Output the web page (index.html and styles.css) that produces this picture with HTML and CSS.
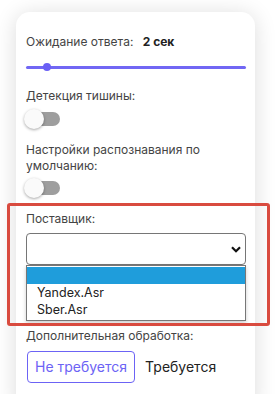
FILE: index.html
```html
<!DOCTYPE html>
<html lang="ru">
<head>
<meta charset="utf-8">
<link rel="stylesheet" href="styles.css">
</head>
<body>
<div class="card">
  <div class="field">
    <div class="label">Ожидание ответа: <b class="value">2 сек</b></div>
    <div class="slider"><div class="track"></div><span class="thumb"></span></div>
  </div>
  <div class="field">
    <div class="label">Детекция тишины:</div>
    <div class="switch"><span class="knob"></span></div>
  </div>
  <div class="field tight">
    <div class="label">Настройки распознавания по умолчанию:</div>
    <div class="switch"><span class="knob"></span></div>
  </div>
  <div class="field provider">
    <div class="label">Поставщик:</div>
    <div class="select">
      <svg class="chev" width="10" height="7" viewBox="0 0 10 7"><path d="M1 1.2 5 5.2 9 1.2" fill="none" stroke="#111" stroke-width="2.2"/></svg>
      <div class="options">
        <div class="opt active">&nbsp;</div>
        <div class="opt">Yandex.Asr</div>
        <div class="opt">Sber.Asr</div>
      </div>
    </div>
  </div>
  <div class="field">
    <div class="label">Дополнительная обработка:</div>
    <div class="segments">
      <span class="seg on">Не требуется</span>
      <span class="seg">Требуется</span>
    </div>
  </div>
</div>
<div class="highlight"></div>
</body>
</html>
```
FILE: styles.css
```css
html, body {
  margin: 0;
  background: #fff;
  overflow: hidden;
  height: 394px;
}
body {
  font-family: Inter, "Noto Sans", sans-serif;
  color: #333;
  position: relative;
}
.card {
  margin: 12px 0 0 16px;
  width: 239px;
  box-sizing: border-box;
  padding: 22px 10px 20px 10px;
  background: #fff;
  border-radius: 14px;
  box-shadow: 0 2px 22px rgba(0, 0, 0, 0.14);
  display: flex;
  flex-direction: column;
}
.field {
  display: flex;
  flex-direction: column;
  gap: 5px;
  margin-bottom: 13px;
}
.field.tight {
  gap: 4px;
}
.label {
  font-size: 12px;
  line-height: 16px;
  color: #444;
}
.value {
  font-weight: 700;
  color: #222;
  margin-left: 6px;
}
.slider {
  margin-top: 8px;
  margin-bottom: 4px;
  height: 8px;
  width: 220px;
  position: relative;
  display: flex;
  align-items: center;
}
.track {
  height: 3px;
  width: 100%;
  background: #7167f4;
  border-radius: 2px;
}
.thumb {
  position: absolute;
  left: 17px;
  top: 0;
  width: 8px;
  height: 8px;
  border-radius: 50%;
  background: #6a5ff5;
}
.switch {
  position: relative;
  width: 38px;
  height: 20px;
  margin-left: -2px;
}
.switch::before {
  content: "";
  position: absolute;
  left: 4px;
  right: 2px;
  top: 3px;
  height: 14px;
  border-radius: 7px;
  background: #9e9e9e;
}
.knob {
  position: absolute;
  left: 0;
  top: 0;
  width: 20px;
  height: 20px;
  border-radius: 50%;
  background: #fafafa;
  box-shadow: 0 1px 3px rgba(0, 0, 0, 0.35);
}
.provider {
  gap: 6px;
  margin-bottom: 63px;
}
.select {
  position: relative;
  height: 32px;
  width: 220px;
  box-sizing: border-box;
  border: 1px solid #767676;
  border-radius: 4px;
}
.chev {
  position: absolute;
  right: 4px;
  top: 12px;
}
.options {
  position: absolute;
  left: -1px;
  top: 31px;
  width: 220px;
  box-sizing: border-box;
  border: 1px solid #777;
  background: #fff;
  box-shadow: 0 2px 4px rgba(0, 0, 0, 0.2);
  padding: 1px 0 2px;
  z-index: 2;
}
.opt {
  height: 17px;
  line-height: 17px;
  font-size: 12.5px;
  padding-left: 10px;
  color: #222;
}
.opt.active {
  background: #1f9ddb;
}
.segments {
  display: flex;
  gap: 2px;
  margin-top: 2px;
  margin-left: 1px;
}
.seg {
  height: 32px;
  line-height: 30px;
  box-sizing: border-box;
  padding: 0 7px;
  border: 1px solid transparent;
  border-radius: 4px;
  font-size: 14px;
  color: #222;
}
.seg.on {
  border-color: #6c63f5;
  color: #6c63f5;
}
.highlight {
  position: absolute;
  left: 7px;
  top: 203px;
  width: 263px;
  height: 123px;
  box-sizing: border-box;
  border: 3px solid #d94b3f;
  border-radius: 3px;
  z-index: 3;
}
```
